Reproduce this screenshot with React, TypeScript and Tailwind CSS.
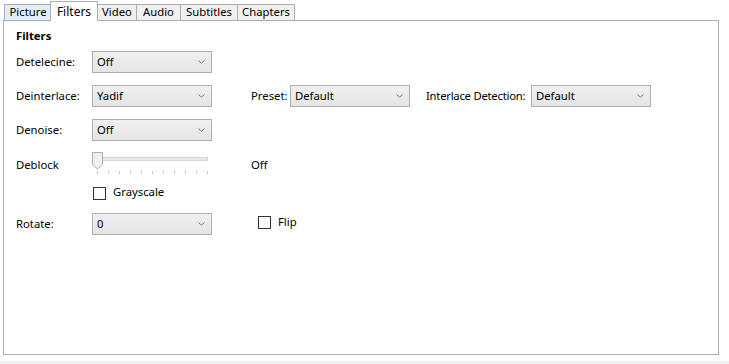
import React from "react";

const font = { fontFamily: '"Noto Sans", "Open Sans", sans-serif' };

function Chevron() {
    return (
        <svg width="7" height="4" viewBox="0 0 7 4" className="shrink-0">
            <path d="M0.5 0.5 L3.5 3.2 L6.5 0.5" fill="none" stroke="#7a7a7a" strokeWidth="1" />
        </svg>
    );
}

function Combo({ value }: { value: string }) {
    return (
        <div className="w-[120px] h-[22px] shrink-0 flex items-center justify-between border border-[#adadad] bg-gradient-to-b from-[#f0f0f0] to-[#e5e5e5] pl-[4px] pr-[6px]">
            <span className="leading-none -mt-px">{value}</span>
            <Chevron />
        </div>
    );
}

function Checkbox({ label }: { label: string }) {
    return (
        <div className="flex items-center">
            <div className="w-[13px] h-[13px] border border-[#333333] bg-white shrink-0" />
            <span className="ml-[7px] leading-none -mt-[2px]">{label}</span>
        </div>
    );
}

function Tab({ label, w, active, first, hover }: { label: string; w: string; active?: boolean; first?: boolean; hover?: boolean }) {
    if (active) {
        return (
            <div className={`relative z-10 -ml-[2px] mb-[-1px] h-[20px] ${w} flex items-center justify-center bg-white border border-b-0 border-[#adadad] text-[12px]`}>
                {label}
            </div>
        );
    }
    return (
        <div
            className={`h-[16px] ${w} flex items-center justify-center border border-b-0 border-[#adadad] ${first ? "" : "-ml-px"} ${
                hover ? "bg-[#e3eef9]" : "bg-[#f0f0f0]"
            }`}
        >
            {label}
        </div>
    );
}

export default function App() {
    const ticks = Array.from({ length: 11 }, (_, i) => i);

    return (
        <div className="w-[729px] h-[364px] bg-white text-black text-[11.3px] flex flex-col whitespace-nowrap" style={font}>
            {/* Tabs */}
            <div className="h-[20px] flex items-end pl-[4px]">
                <Tab label="Picture" w="w-[48px]" first hover />
                <Tab label="Filters" w="w-[48px]" active />
                <Tab label="Video" w="w-[40px]" />
                <Tab label="Audio" w="w-[45px]" />
                <Tab label="Subtitles" w="w-[58px]" />
                <Tab label="Chapters" w="w-[58px]" />
            </div>

            {/* Panel */}
            <div className="ml-[3px] w-[716px] h-[335px] border border-[#adadad] bg-white pl-[12px] pt-[7px] flex flex-col">
                <div className="h-[16px] flex items-center font-bold">Filters</div>

                {/* Detelecine */}
                <div className="mt-[7px] h-[22px] flex items-center">
                    <span className="w-[76px] shrink-0">Detelecine:</span>
                    <Combo value="Off" />
                </div>

                {/* Deinterlace */}
                <div className="mt-[12px] h-[22px] flex items-center">
                    <span className="w-[76px] shrink-0">Deinterlace:</span>
                    <Combo value="Yadif" />
                    <span className="ml-[39px] w-[39px] shrink-0">Preset:</span>
                    <Combo value="Default" />
                    <span className="ml-[16px] w-[105px] shrink-0 tracking-[-0.25px]">Interlace Detection:</span>
                    <Combo value="Default" />
                </div>

                {/* Denoise */}
                <div className="mt-[12px] h-[22px] flex items-center">
                    <span className="w-[76px] shrink-0">Denoise:</span>
                    <Combo value="Off" />
                </div>

                {/* Deblock */}
                <div className="mt-[11px] h-[24px] flex items-start">
                    <span className="w-[76px] shrink-0 mt-[5px]">Deblock</span>
                    <div className="w-[120px] shrink-0 relative h-[24px]">
                        <div className="absolute left-[9px] top-[5px] w-[107px] h-[4px] bg-[#e7eaea] border border-[#d6d6d6]" />
                        <svg width="11" height="18" viewBox="0 0 11 18" className="absolute left-0 top-0">
                            <path d="M0.5 0.5 H10.5 V12.5 L5.5 17 L0.5 12.5 Z" fill="#f0f0f0" stroke="#adadad" />
                        </svg>
                        <div className="absolute left-[5px] top-[19px] flex gap-[10px]">
                            {ticks.map((t) => (
                                <div key={t} className="w-px h-[3px] bg-[#c4c4c4]" />
                            ))}
                        </div>
                    </div>
                    <span className="ml-[39px] mt-[5px]">Off</span>
                </div>

                {/* Grayscale */}
                <div className="mt-[8px] h-[18px] flex items-center pl-[77px]">
                    <Checkbox label="Grayscale" />
                </div>

                {/* Rotate */}
                <div className="mt-[11px] h-[22px] flex items-center">
                    <span className="w-[76px] shrink-0">Rotate:</span>
                    <Combo value="0" />
                    <div className="ml-[46px] -mt-[3px]">
                        <Checkbox label="Flip" />
                    </div>
                </div>
            </div>

            <div className="flex-1" />
            <div className="h-[3px] bg-[#f0f0f0]" />
        </div>
    );
}
